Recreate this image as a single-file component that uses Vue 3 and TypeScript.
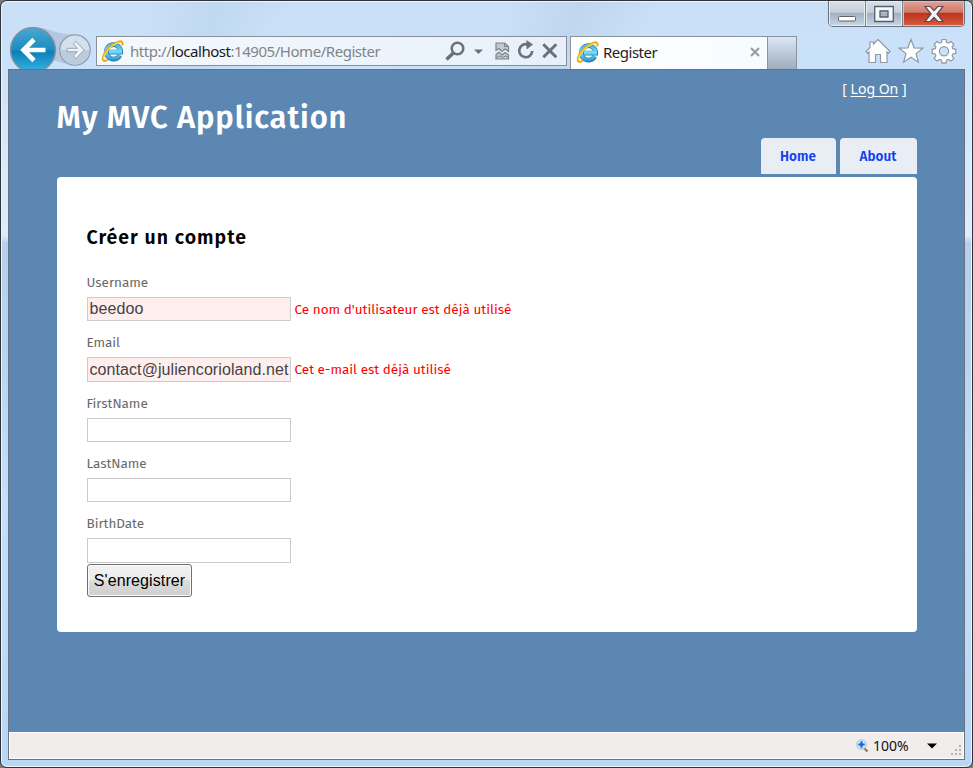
<script setup lang="ts">
import { ref } from 'vue'

interface Field {
  id: string
  label: string
  value: string
  error?: string
}

const fields = ref<Field[]>([
  { id: 'username', label: 'Username', value: 'beedoo', error: "Ce nom d'utilisateur est déjà utilisé" },
  { id: 'email', label: 'Email', value: 'contact@juliencorioland.net', error: 'Cet e-mail est déjà utilisé' },
  { id: 'firstname', label: 'FirstName', value: '' },
  { id: 'lastname', label: 'LastName', value: '' },
  { id: 'birthdate', label: 'BirthDate', value: '' },
])
</script>

<template>
  <div class="window">
    <svg class="defs" width="0" height="0" aria-hidden="true">
      <defs>
        <linearGradient id="ieBlue" gradientUnits="userSpaceOnUse" x1="0" y1="3" x2="0" y2="22">
          <stop offset="0" stop-color="#3aa6dc" />
          <stop offset="0.5" stop-color="#74daf8" />
          <stop offset="1" stop-color="#2390d0" />
        </linearGradient>
        <symbol id="ie" viewBox="0 0 24 24">
          <path d="M18.800 16.400a7.200 7.200 0 1 1 .9-3.300H8" fill="none" stroke="#2279ad" stroke-width="4.800" />
          <path d="M18.400 16.200a7.200 7.200 0 1 1 1-3.300H8" fill="none" stroke="url(#ieBlue)" stroke-width="3.600" />
          <path d="M21.200 6.400C22.400 3.400 20.800 1.600 17.400 2.600 12.200 4 5.800 9.600 3.200 15c-2.200 4.600-1.800 7.600 1.200 6.800 1-.3 1.800-.7 2.600-1.300" fill="none" stroke="#e9a713" stroke-width="2" />
          <path d="M20.400 4.500C19.600 2.300 14.600 4 9.800 8.200 5.200 12.200 2 17.600 2.600 20.600" fill="none" stroke="#ffdc3d" stroke-width="1.300" />
        </symbol>
      </defs>
    </svg>

    <header class="chrome">
      <div class="titlebar">
        <div class="controls">
          <button class="ctl min" aria-label="Minimize">
            <svg width="20" height="16" viewBox="0 0 20 16"><rect x="1.500" y="8.500" width="17" height="4.500" rx="1" fill="#fff" stroke="#5c6570" /></svg>
          </button>
          <button class="ctl max" aria-label="Maximize">
            <svg width="20" height="18" viewBox="0 0 20 18"><path d="M.7 1.500h18.600v15H.7zM6 6v6h8V6z" fill="#f5f7f9" fill-rule="evenodd" stroke="#555f6b" stroke-width="1.300" /></svg>
          </button>
          <button class="ctl close" aria-label="Close">
            <svg width="20" height="18" viewBox="0 0 20 18"><path d="M1 1.500h5.200L10 5.700l3.800-4.200H19L12.900 9l6.100 7.500h-5.200L10 12.300l-3.800 4.200H1L7.100 9z" fill="#f5f5f5" stroke="#5a4a52" stroke-width="1.200" /></svg>
          </button>
        </div>
      </div>
      <div class="toolbar">
        <svg class="navigation" width="86" height="42" viewBox="0 0 86 42">
          <defs>
            <linearGradient id="back" x1="0" y1="0" x2="0" y2="1">
              <stop offset="0" stop-color="#48a8d1" />
              <stop offset=".5" stop-color="#1c8bc1" />
              <stop offset=".53" stop-color="#0c7eb9" />
              <stop offset="1" stop-color="#36b6e4" />
            </linearGradient>
          </defs>
          <path d="M30 1c12 1 17 7 35 6l-10 30-15-5z" fill="#8a9bb0" opacity=".35" />
          <circle cx="23" cy="23" r="22.400" fill="url(#back)" stroke="#8491a0" stroke-width="1.500" />
          <path d="M35.500 23H13.500M24 12.500 13.500 23 24 33.500" fill="none" stroke="#fff" stroke-width="4.600" />
          <circle cx="65" cy="23" r="15.200" fill="#d3e1ef" stroke="#929eac" stroke-width="1.300" />
          <path d="M50.600 23h28.800a14.400 14.400 0 0 1-28.800 0" fill="#bccbdd" />
          <path d="M57 21.300h10.500L63.300 17l2.600-2.600 8.300 8.600-8.300 8.600-2.600-2.600 4.200-4.300H57z" fill="#edf2f7" stroke="#98a5b4" />
        </svg>
        <div class="address">
          <svg class="ie" width="24" height="24"><use href="#ie" /></svg>
          <span class="url">http://<b>localhost</b>:14905/Home/Register</span>
          <svg class="tools" width="116" height="24" viewBox="0 0 116 24" fill="none" stroke="#6c7077">
            <circle cx="13.500" cy="9.500" r="5.800" stroke-width="2.500" />
            <path d="M9.300 14 2.500 20.500" stroke-width="3.500" />
            <path d="M30 10.500h9L34.500 15z" fill="#6c7077" stroke="none" />
            <path d="M52 11.500V4h8.500l4 3.500v5L61 10l-3 2.500-3-3z" fill="#c3c9d1" stroke="#7d828a" stroke-width="1.200" />
            <path d="M60.500 4v3.500h4" stroke="#7d828a" />
            <path d="M52 15.500 55 13l3 3 3-2.500 3.500 2.500v4H52z" fill="#c3c9d1" stroke="#7d828a" stroke-width="1.200" />
            <path d="m52.500 18.500 3-1.500 3 1.500 3-1.500 3 1.500" stroke="#7d828a" />
            <path d="M83.500 5.500a6.500 6.500 0 1 0 4.700 6.500" stroke-width="2.700" />
            <path d="m82.500 1 6.500 4.500-6.500 5z" fill="#6c7077" stroke="none" />
            <path d="m99.300 5.300 13 13m0-13-13 13" stroke-width="3" />
          </svg>
        </div>
        <div class="tab">
          <svg class="ie" width="24" height="24"><use href="#ie" /></svg>
          <span class="tabtitle">Register</span>
          <svg class="tabclose" width="10" height="10" viewBox="0 0 10 10"><path d="m1 1 8 8m0-8-8 8" stroke="#999ea5" stroke-width="2.200" /></svg>
        </div>
        <div class="newtab"></div>
        <div class="commands">
          <svg width="26" height="26" viewBox="0 0 26 26"><path d="m13 1.500 12 12-1.600 1.600-1.400-1.200V24.500h-6.500v-8h-5v8H4V13.900l-1.400 1.200L1 13.500 5 9.500V4h3.500v2z" fill="#fff" stroke="#9198a2" stroke-width="1.200" /></svg>
          <svg width="26" height="26" viewBox="0 0 26 26"><path d="m13 1.500 3.100 8.300 8.700.3-6.800 5.500 2.400 8.600L13 19.300l-7.400 4.900L8 15.600l-6.800-5.500 8.700-.3z" fill="#fff" stroke="#9198a2" stroke-width="1.200" /></svg>
          <svg width="26" height="26" viewBox="0 0 26 26">
            <path d="M11 1.500h4l.6 3 1.800.7 2.600-1.700 2.800 2.800-1.700 2.600.7 1.800 3 .6v4l-3 .6-.7 1.800 1.700 2.600-2.800 2.800-2.600-1.700-1.800.7-.6 3h-4l-.6-3-1.800-.7L6 23.100l-2.800-2.800 1.700-2.600-.7-1.800-3-.6v-4l3-.6.7-1.800-1.700-2.600L6 3.500l2.600 1.700 1.800-.7zM13 8.700a4.600 4.600 0 1 0 0 9.200 4.600 4.600 0 0 0 0-9.200z" fill="#fff" fill-rule="evenodd" stroke="#9198a2" stroke-width="1.200" />
          </svg>
        </div>
      </div>
    </header>

    <div class="client">
      <div class="page">
        <div class="login">[ <a>Log On</a> ]</div>
        <h1><span>My MVC Application</span></h1>
        <nav class="menu">
          <a class="home"><span>Home</span></a>
          <a class="about"><span>About</span></a>
        </nav>
        <main>
          <h2>Créer un compte</h2>
          <form @submit.prevent>
            <div v-for="field in fields" :key="field.id" class="field">
              <label :for="field.id">{{ field.label }}</label>
              <div class="entry">
                <input :id="field.id" v-model="field.value" type="text" :class="{ invalid: field.error }" />
                <span v-if="field.error" class="error">{{ field.error }}</span>
              </div>
            </div>
            <button class="submit" type="submit">S'enregistrer</button>
          </form>
        </main>
      </div>
      <footer class="status">
        <svg width="13" height="14" viewBox="0 0 13 14">
          <path d="m8 9 3.500 3.500" stroke="#a9764f" stroke-width="2.400" />
          <circle cx="5.500" cy="5.500" r="4.800" fill="#d9ecfb" stroke="#a3bdd5" />
          <path d="M5.500 2.300v6.400M2.300 5.500h6.400" stroke="#176bc8" stroke-width="2.200" />
        </svg>
        <span class="zoom">100%</span>
        <svg class="caret" width="10" height="6" viewBox="0 0 10 6"><path d="M0 .5h10L5 5.500z" fill="#000" /></svg>
        <svg class="grip" width="12" height="12" viewBox="0 0 12 12" fill="#b5b1b2">
          <path d="M8 0h2v2H8zM4 4h2v2H4zM8 4h2v2H8zM0 8h2v2H0zM4 8h2v2H4zM8 8h2v2H8z" />
        </svg>
      </footer>
    </div>
  </div>
</template>

<style>
body {
  margin: 0;
  background: #77797c;
}
</style>

<style scoped>
* {
  box-sizing: border-box;
}
.window {
  width: 973px;
  height: 768px;
  padding: 0 7px 7px 7px;
  overflow: hidden;
  border: 1px solid #2e3137;
  border-radius: 7px;
  background:
    linear-gradient(115deg, transparent 0 15%, #b4cde966 22%, transparent 29% 51%, #b2c8e466 58%, transparent 66%) 0 0 / 100% 68px no-repeat,
    linear-gradient(180deg, #c9dff6 0, #c9e2fb 68px, #d7eafc 160px, #dcecfb 235px, #b5cfec 242px, #b9d4f0 360px, #c5dffa 500px, #b9d6f5 100%);
  box-shadow: inset 0 0 0 1px #edf7ff;
  font-family: "Noto Sans", "Open Sans", sans-serif;
}
.defs {
  display: block;
}
.chrome {
  height: 68px;
}
.titlebar {
  display: flex;
  justify-content: flex-end;
  height: 26px;
}
.controls {
  display: flex;
  width: 137px;
  height: 26px;
  overflow: hidden;
  border: 1px solid #68717e;
  border-top: 0;
  border-radius: 0 0 5px 5px;
}
.ctl {
  display: flex;
  justify-content: center;
  align-items: center;
  width: 37px;
  padding: 0;
  border: 0;
  border-right: 1px solid #78828f;
  background: linear-gradient(#d8e0e9 0, #c5ced9 45%, #a3b0c1 50%, #c8d6e6 100%);
  box-shadow: inset 0 0 0 1px #e5edf5;
}
.min svg {
  margin-top: 4px;
}
.close {
  flex: 1;
  border-right: 0;
  background: linear-gradient(#e2a299 0, #d17868 45%, #bc3520 50%, #d95c40 100%);
  box-shadow: inset 0 0 0 1px #edb9ac;
}
.toolbar {
  display: flex;
  height: 42px;
  padding-left: 2px;
}
.navigation {
  flex: none;
}
.address {
  display: flex;
  align-items: center;
  width: 471px;
  height: 30px;
  margin-top: 9px;
  padding-left: 4px;
  border: 1px solid #898f98;
  background: linear-gradient(90deg, #f5f9fd, #e7f0fa);
}
.ie {
  flex: none;
}
.url {
  width: 314px;
  margin-left: 5px;
  color: #818488;
  font-size: 15px;
  line-height: 20px;
  letter-spacing: -0.46px;
  white-space: nowrap;
}
.url b {
  color: #17191b;
  font-weight: 400;
}
.tools {
  flex: none;
}
.tab {
  display: flex;
  align-items: center;
  width: 198px;
  height: 33px;
  margin: 9px 0 0 3px;
  padding: 0 7px 2px 5px;
  border: 1px solid #8b939d;
  border-bottom: 0;
  background: linear-gradient(90deg, #fff, #f6fcff);
}
.tabtitle {
  flex: 1;
  margin-left: 3px;
  color: #1f2226;
  font-size: 15px;
  line-height: 20px;
  letter-spacing: -0.5px;
}
.newtab {
  width: 29px;
  height: 33px;
  margin-top: 9px;
  border: 1px solid #8b939d;
  border-width: 1px 1px 0 0;
  background: linear-gradient(#dae7f5, #a0adbd);
}
.commands {
  display: flex;
  gap: 7px;
  margin: 11px 0 0 67.500px;
}
.client {
  display: flex;
  flex-direction: column;
  height: 691px;
  border: 1px solid #68737f;
  background: #5c87b2;
}
.page {
  width: 860px;
  height: 662px;
  margin-left: 47.500px;
  font-family: "Fira Sans", Lato, "Open Sans", sans-serif;
}
.login {
  height: 22px;
  padding: 8px 10px 0 0;
  color: #fff;
  font-family: "Noto Sans", sans-serif;
  font-size: 14px;
  line-height: 22px;
  text-align: right;
}
.login a {
  text-decoration: underline;
  text-underline-offset: 2px;
}
h1 {
  height: 46px;
  margin: 0;
  color: #fff;
  font-size: 31px;
  font-weight: 600;
  line-height: 52px;
  letter-spacing: 0.85px;
  white-space: nowrap;
}
.menu {
  display: flex;
  justify-content: flex-end;
  gap: 4px;
  height: 36px;
}
.menu a {
  display: flex;
  justify-content: center;
  align-items: center;
  width: 75px;
  height: 35.500px;
  padding-top: 1px;
  border-radius: 4px 4px 0 0;
  background: #e8eef4;
  color: #0f3ff2;
  font-size: 13.500px;
  font-weight: 600;
  letter-spacing: 0.1px;
}
.menu .about {
  width: 77px;
}
main {
  height: 455px;
  margin-top: 3.400px;
  padding: 47px 30px 0;
  border-radius: 4px;
  background: #fff;
}
h2 {
  height: 47.600px;
  margin: 0;
  color: #000;
  font-size: 19.500px;
  font-weight: 600;
  line-height: 27px;
  letter-spacing: 1px;
  white-space: nowrap;
}
.field {
  height: 60.300px;
}
label {
  display: block;
  width: max-content;
  height: 25px;
  color: #696969;
  font-size: 13.500px;
  line-height: 22.500px;
  letter-spacing: -0.05px;
}
.entry {
  display: flex;
  align-items: center;
  height: 24.500px;
}
input {
  width: 204px;
  height: 24.500px;
  padding: 0 0 0 2px;
  border: 1px solid #ccc;
  border-radius: 0;
  background: #fff;
  color: #444;
  font-family: "Liberation Sans", sans-serif;
  font-size: 16px;
  letter-spacing: 0.08px;
  outline: 0;
}
input.invalid {
  background: #ffeeee;
}
.error {
  margin-left: 4px;
  color: #f00;
  font-size: 13.500px;
  white-space: nowrap;
}
.submit {
  display: block;
  width: 105px;
  height: 33px;
  margin: -9px 0 0 0.500px;
  padding: 0;
  border: 1px solid #707070;
  border-radius: 3px;
  background: linear-gradient(#f2f2f2 0, #ebebeb 49%, #dcdcdc 50%, #cfcfcf 100%);
  box-shadow: inset 0 0 0 1px #fafafa;
  color: #000;
  font-family: "Liberation Sans", sans-serif;
  font-size: 16px;
  letter-spacing: 0.1px;
}
.status {
  display: flex;
  flex: none;
  align-items: center;
  justify-content: flex-end;
  height: 27px;
  border: 1px solid #fff;
  background: #f0edec;
  color: #111;
}
.zoom {
  width: 38px;
  margin-left: 4px;
  font-size: 14px;
}
.caret {
  margin-left: 16px;
}
.grip {
  align-self: flex-end;
  margin: 0 0 1px 14px;
}
</style>
